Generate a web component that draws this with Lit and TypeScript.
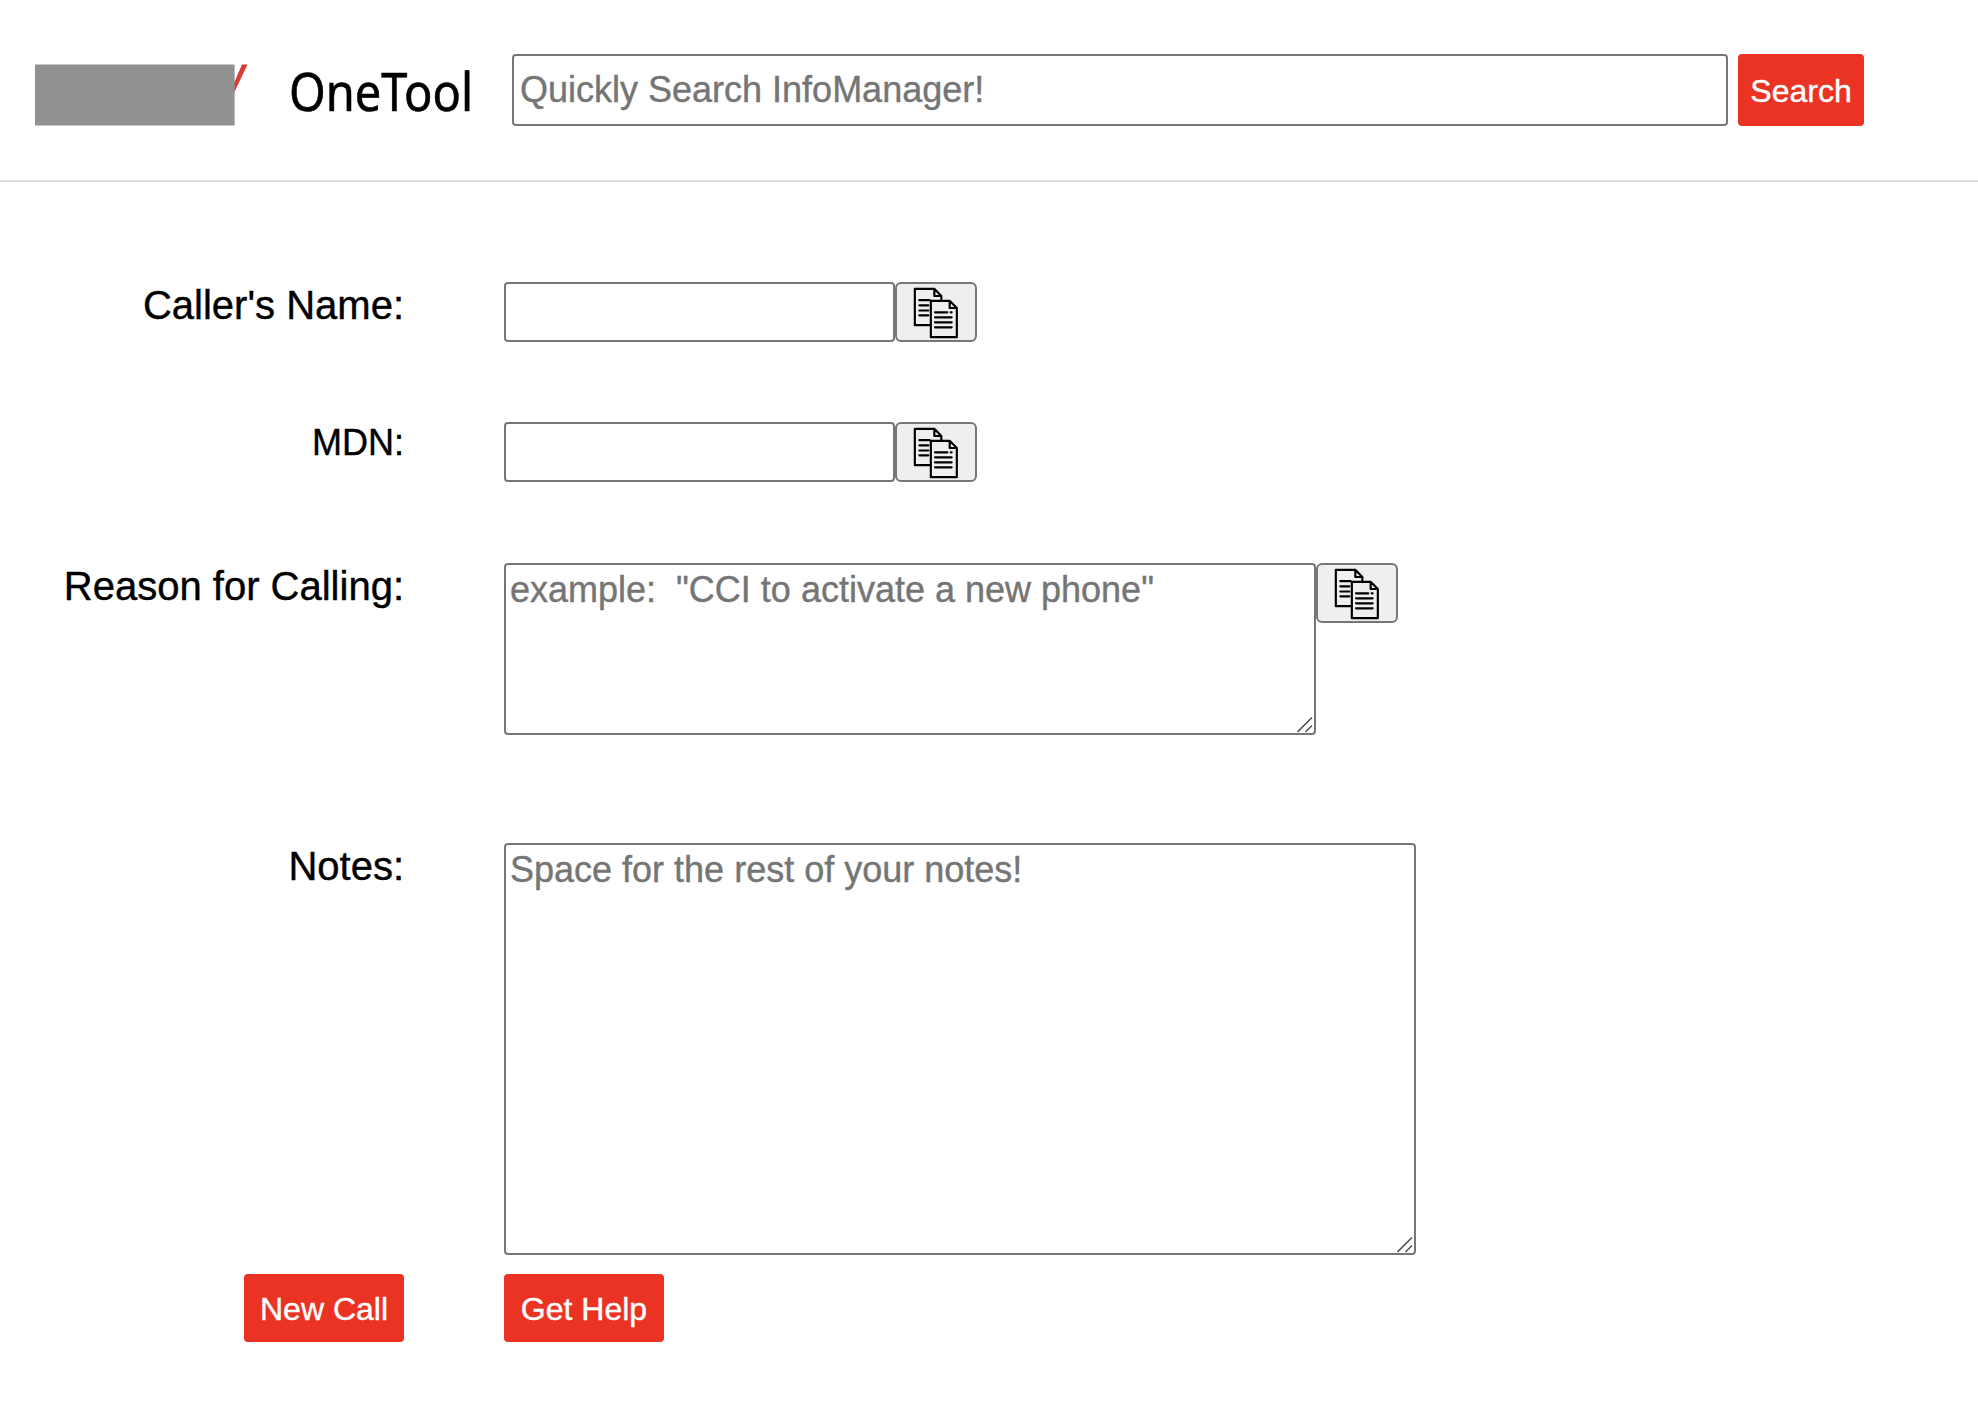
import { LitElement, html, css } from "lit";
import { customElement } from "lit/decorators.js";

@customElement("copy-button")
class CopyButton extends LitElement {
  static styles = css`
    :host { display: block; }
    .copy {
      box-sizing: border-box; display: block; width: 82px; height: 60px;
      margin: 0; padding: 0; border: 2px solid #767676; border-radius: 6px;
      background: #efefef;
    }
    .icon { display: block; width: 78px; height: 56px; }
  `;
  render() {
    return html`<button class="copy" aria-label="Copy">
      <svg class="icon" viewBox="52 42 234 168" fill="none" stroke="#000" stroke-width="6.500" stroke-linejoin="round" stroke-linecap="round">
        <path d="M150 165.500H105.500V56.500H164L185 78V90M164 56.500V78H185M119 90.500H150M119 106H146M119 121.500H146M119 136H146" />
        <path d="M153.500 92.500H210L231.500 114V201.500H153.500ZM210 92.500V114H231.500M166 127H203M213 127H216M166 142H216M166 157H216M166 172H216" />
      </svg>
    </button>`;
  }
}

@customElement("note-area")
class NoteArea extends LitElement {
  static properties = { placeholder: {}, size: {} };
  declare placeholder: string;
  declare size: string;
  static styles = css`
    :host { display: block; position: relative; }
    .area {
      box-sizing: border-box; display: block; margin: 0; padding: 4px;
      border: 2px solid #767676; border-radius: 4px; background: #fff;
      font: 36px "Liberation Sans", Arial, sans-serif; resize: none; outline: none;
    }
    .short { width: 812px; height: 172px; }
    .tall { width: 912px; height: 412px; }
    .area::placeholder { color: #757575; -webkit-text-stroke: 0.4px #757575; }
    .grip { position: absolute; right: 3px; bottom: 2px; width: 16px; height: 16px; }
  `;
  render() {
    return html`<textarea class="area ${this.size}" placeholder=${this.placeholder}></textarea>
      <svg class="grip" viewBox="0 0 16 16" stroke="#555" stroke-width="1.600"><path d="M.5 15L15 .5M8.500 15L15 8.500" /></svg>`;
  }
}

@customElement("app-root")
class AppRoot extends LitElement {
  static styles = css`
    :host {
      display: block; height: 1418px; background: #fff; color: #000;
      font-family: "Liberation Sans", Arial, sans-serif; overflow: hidden;
    }
    .header {
      box-sizing: border-box; height: 182px; padding: 54px 0 0 35px;
      border-bottom: 2px solid #ddd; display: flex; align-items: flex-start;
    }
    .logo { display: block; width: 216px; height: 62px; margin-top: 10px; }
    .title {
      width: 220px; margin: 0 0 0 38px; padding-top: 2px; font: 400 52px/70px "Noto Sans", "Open Sans", sans-serif;
      white-space: nowrap; -webkit-text-stroke: 0.6px #000;
    }
    .title-text { display: inline-block; transform: scaleX(.904); transform-origin: 0 0; }
    .field {
      box-sizing: border-box; display: block; margin: 0; border: 2px solid #767676;
      border-radius: 4px; background: #fff; font: 36px "Liberation Sans", Arial, sans-serif; outline: none;
    }
    .field::placeholder { color: #757575; opacity: 1; -webkit-text-stroke: 0.4px #757575; }
    .search { width: 1216px; height: 72px; padding: 0 6px; margin-left: 3px; }
    .text { width: 391px; height: 60px; padding: 0 4px; }
    .btn {
      margin: 0; padding: 2px 0 0; border: 0; border-radius: 4px; background: #ea3323;
      color: #fff; font: 32px "Liberation Sans", Arial, sans-serif; width: 160px; height: 68px;
      -webkit-text-stroke: 0.4px #fff;
    }
    .go { width: 126px; height: 72px; margin-left: 10px; }
    .form {
      display: grid; grid-template-columns: 404px auto; column-gap: 100px;
      grid-template-rows: 140px 141px 280px 431px 68px; padding-top: 100px; justify-content: start;
    }
    .label { text-align: right; font-size: 40px; line-height: 46px; -webkit-text-stroke: 0.4px #000; }
    .mdn { font-size: 36px; line-height: 41px; }
    .control { display: flex; align-items: flex-start; }
    .left { display: flex; justify-content: flex-end; }
  `;
  render() {
    return html`
      <header class="header">
        <svg class="logo" viewBox="0 0 216 62">
          <path d="M199 19L207 0.500H212.500L199 29Z" fill="#d53b38" />
          <rect x="-0.400" y="0.500" width="200" height="61" fill="#919191" />
        </svg>
        <h1 class="title"><span class="title-text">OneTool</span></h1>
        <input class="field search" placeholder="Quickly Search InfoManager!" />
        <button class="btn go">Search</button>
      </header>
      <main class="form">
        <label class="label">Caller's Name:</label>
        <div class="control"><input class="field text" /><copy-button></copy-button></div>
        <label class="label mdn">MDN:</label>
        <div class="control"><input class="field text" /><copy-button></copy-button></div>
        <label class="label">Reason for Calling:</label>
        <div class="control">
          <note-area size="short" placeholder='example:  "CCI to activate a new phone"'></note-area>
          <copy-button></copy-button>
        </div>
        <label class="label">Notes:</label>
        <div class="control"><note-area size="tall" placeholder="Space for the rest of your notes!"></note-area></div>
        <div class="left"><button class="btn">New Call</button></div>
        <div class="control"><button class="btn">Get Help</button></div>
      </main>
    `;
  }
}
